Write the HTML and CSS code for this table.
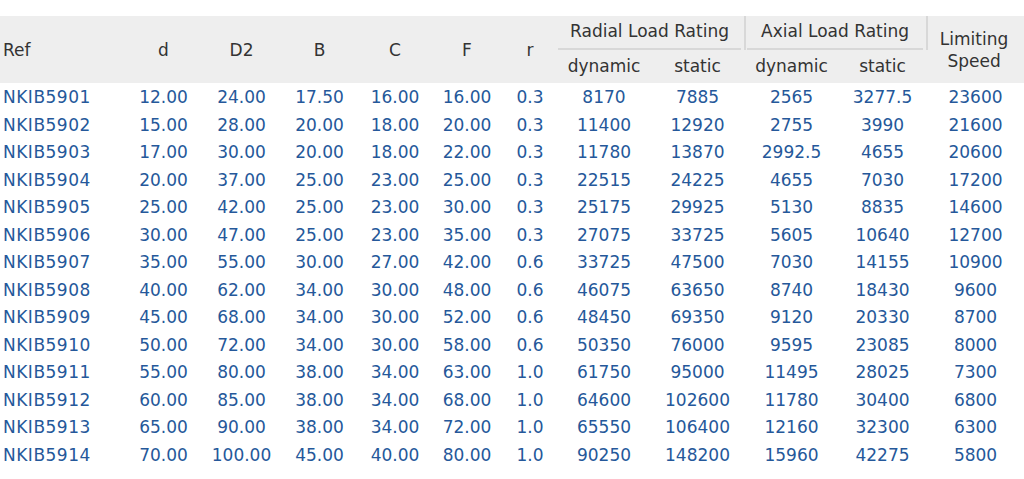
FILE: index.html
```html
<!DOCTYPE html>
<html>
<head>
<meta charset="utf-8">
<link rel="stylesheet" href="styles.css">
</head>
<body>
<table class="spec">
  <colgroup>
    <col class="c-ref"><col class="c-d"><col class="c-d2"><col class="c-b"><col class="c-c"><col class="c-f"><col class="c-r">
    <col class="c-rdyn"><col class="c-rsta"><col class="c-adyn"><col class="c-asta"><col class="c-lim">
  </colgroup>
  <thead>
    <tr class="h1">
      <th rowspan="2" class="ref">Ref</th>
      <th rowspan="2">d</th>
      <th rowspan="2">D2</th>
      <th rowspan="2">B</th>
      <th rowspan="2">C</th>
      <th rowspan="2">F</th>
      <th rowspan="2">r</th>
      <th colspan="2" class="group radial"><div class="grp-label">Radial Load Rating</div></th>
      <th colspan="2" class="group axial"><div class="grp-label">Axial Load Rating</div></th>
      <th rowspan="2" class="lim">Limiting<br>Speed</th>
    </tr>
    <tr class="h2">
      <th>dynamic</th><th>static</th><th>dynamic</th><th>static</th>
    </tr>
  </thead>
  <tbody>
    <tr><td class="ref">NKIB5901</td><td>12.00</td><td>24.00</td><td>17.50</td><td>16.00</td><td>16.00</td><td>0.3</td><td>8170</td><td>7885</td><td>2565</td><td>3277.5</td><td>23600</td></tr>
    <tr><td class="ref">NKIB5902</td><td>15.00</td><td>28.00</td><td>20.00</td><td>18.00</td><td>20.00</td><td>0.3</td><td>11400</td><td>12920</td><td>2755</td><td>3990</td><td>21600</td></tr>
    <tr><td class="ref">NKIB5903</td><td>17.00</td><td>30.00</td><td>20.00</td><td>18.00</td><td>22.00</td><td>0.3</td><td>11780</td><td>13870</td><td>2992.5</td><td>4655</td><td>20600</td></tr>
    <tr><td class="ref">NKIB5904</td><td>20.00</td><td>37.00</td><td>25.00</td><td>23.00</td><td>25.00</td><td>0.3</td><td>22515</td><td>24225</td><td>4655</td><td>7030</td><td>17200</td></tr>
    <tr><td class="ref">NKIB5905</td><td>25.00</td><td>42.00</td><td>25.00</td><td>23.00</td><td>30.00</td><td>0.3</td><td>25175</td><td>29925</td><td>5130</td><td>8835</td><td>14600</td></tr>
    <tr><td class="ref">NKIB5906</td><td>30.00</td><td>47.00</td><td>25.00</td><td>23.00</td><td>35.00</td><td>0.3</td><td>27075</td><td>33725</td><td>5605</td><td>10640</td><td>12700</td></tr>
    <tr><td class="ref">NKIB5907</td><td>35.00</td><td>55.00</td><td>30.00</td><td>27.00</td><td>42.00</td><td>0.6</td><td>33725</td><td>47500</td><td>7030</td><td>14155</td><td>10900</td></tr>
    <tr><td class="ref">NKIB5908</td><td>40.00</td><td>62.00</td><td>34.00</td><td>30.00</td><td>48.00</td><td>0.6</td><td>46075</td><td>63650</td><td>8740</td><td>18430</td><td>9600</td></tr>
    <tr><td class="ref">NKIB5909</td><td>45.00</td><td>68.00</td><td>34.00</td><td>30.00</td><td>52.00</td><td>0.6</td><td>48450</td><td>69350</td><td>9120</td><td>20330</td><td>8700</td></tr>
    <tr><td class="ref">NKIB5910</td><td>50.00</td><td>72.00</td><td>34.00</td><td>30.00</td><td>58.00</td><td>0.6</td><td>50350</td><td>76000</td><td>9595</td><td>23085</td><td>8000</td></tr>
    <tr><td class="ref">NKIB5911</td><td>55.00</td><td>80.00</td><td>38.00</td><td>34.00</td><td>63.00</td><td>1.0</td><td>61750</td><td>95000</td><td>11495</td><td>28025</td><td>7300</td></tr>
    <tr><td class="ref">NKIB5912</td><td>60.00</td><td>85.00</td><td>38.00</td><td>34.00</td><td>68.00</td><td>1.0</td><td>64600</td><td>102600</td><td>11780</td><td>30400</td><td>6800</td></tr>
    <tr><td class="ref">NKIB5913</td><td>65.00</td><td>90.00</td><td>38.00</td><td>34.00</td><td>72.00</td><td>1.0</td><td>65550</td><td>106400</td><td>12160</td><td>32300</td><td>6300</td></tr>
    <tr><td class="ref">NKIB5914</td><td>70.00</td><td>100.00</td><td>45.00</td><td>40.00</td><td>80.00</td><td>1.0</td><td>90250</td><td>148200</td><td>15960</td><td>42275</td><td>5800</td></tr>
  </tbody>
</table>
</body>
</html>
```

FILE: styles.css
```css
html, body {
  margin: 0;
  padding: 0;
  background: #ffffff;
}
body {
  padding-top: 16px;
  font-family: "DejaVu Sans", Verdana, sans-serif;
  font-size: 17px;
}
.spec {
  width: 1024px;
  table-layout: fixed;
  border-collapse: collapse;
  border-spacing: 0;
}
.c-ref { width: 125px; }
.c-d { width: 77px; }
.c-d2 { width: 79px; }
.c-b { width: 77px; }
.c-c { width: 74px; }
.c-f { width: 70px; }
.c-r { width: 56px; }
.c-rdyn { width: 92px; }
.c-rsta { width: 95px; }
.c-adyn { width: 93px; }
.c-asta { width: 89px; }
.c-lim { width: 97px; }

.spec thead {
  background: #eeeeee;
}
.spec th {
  font-weight: normal;
  color: #333333;
  text-align: center;
  padding: 0;
  white-space: nowrap;
}
.spec th.ref, .spec td.ref {
  text-align: left;
  padding-left: 3px;
}
.spec td.ref {
  letter-spacing: 0.5px;
}
.h1 th { height: 33px; }
.h2 th {
  height: 33px;
  vertical-align: top;
  line-height: 33px;
}
.spec th.group {
  border-right: 2px solid #d8d8d8;
  vertical-align: top;
  padding-right: 3px;
}
.spec th.axial { padding-left: 1px; }
.grp-label {
  height: 32px;
  line-height: 30px;
  border-bottom: 2px solid #d8d8d8;
}
.spec th.lim {
  line-height: 22px;
  padding-right: 4px;
}
.spec td {
  height: 25.5px;
  line-height: 25px;
  padding: 2px 0 0 0;
  vertical-align: top;
  text-align: center;
  color: #25589a;
  white-space: nowrap;
}
```
